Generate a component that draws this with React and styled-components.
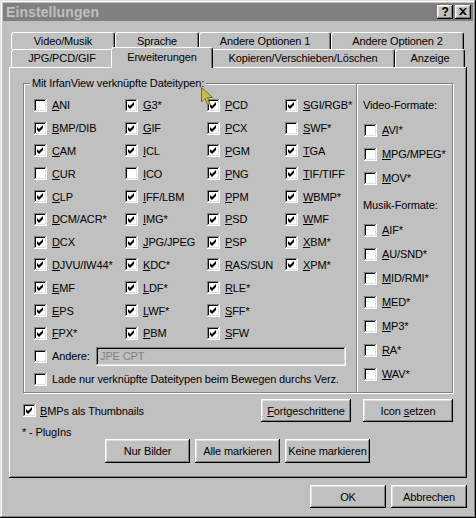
import React from "react";
import styled, { createGlobalStyle } from "styled-components";

const GlobalStyle = createGlobalStyle`
  body {
    margin: 0;
    overflow: hidden;
    font-family: "Liberation Sans", Arial, sans-serif;
    font-size: 11px;
    letter-spacing: -0.12px;
    color: #000;
  }
`;

const Window = styled.div`
  position: relative;
  box-sizing: border-box;
  width: 476px;
  height: 518px;
  padding: 3px;
  background: #c0c0c0;
  box-shadow: inset -1px -1px #000, inset 1px 1px #dfdfdf, inset -2px -2px #808080, inset 2px 2px #fff;
  display: flex;
  flex-direction: column;
`;

const TitleBar = styled.div`
  height: 18px;
  padding: 0 2px 0 3px;
  background: #808080;
  display: flex;
  align-items: center;
  justify-content: space-between;
`;

const Title = styled.span`
  font-size: 14px;
  font-weight: 700;
  color: #c0c0c0;
  letter-spacing: 0.1px;
`;

const CaptionButtons = styled.div`
  display: flex;
  gap: 2px;
`;

const CaptionButton = styled.div`
  box-sizing: border-box;
  width: 16px;
  height: 14px;
  background: #c0c0c0;
  box-shadow: inset -1px -1px #000, inset 1px 1px #fff, inset -2px -2px #808080, inset 2px 2px #dfdfdf;
  display: flex;
  align-items: center;
  justify-content: center;
  font-size: 12px;
  font-weight: 700;
  line-height: 1;
  padding-bottom: 1px;
`;

const Body = styled.div`
  padding: 11px 0 0 6px;
  display: flex;
  flex-direction: column;
`;

const TabStrip = styled.div`
  padding-left: 2px;
  display: flex;
  flex-direction: column;
`;

const TabRow = styled.div`
  display: flex;
  height: ${(p) => (p.$front ? 18 : 17)}px;
  align-items: flex-start;
`;

const Tab = styled.div`
  position: relative;
  box-sizing: border-box;
  flex: none;
  width: ${(p) => p.$w + (p.$active ? 4 : 0)}px;
  height: ${(p) => (p.$active ? 21 : p.$front ? 18 : 17)}px;
  margin: ${(p) => (p.$active ? "-2px -2px 0 -2px" : "0")};
  z-index: ${(p) => (p.$active ? 2 : 0)};
  padding-bottom: ${(p) => (p.$active ? 3 : 1)}px;
  background: #c0c0c0;
  border-top: 1px solid #fff;
  border-left: 1px solid #fff;
  border-right: 1px solid #000;
  border-radius: 3px 3px 0 0;
  box-shadow: inset -1px 0 #808080;
  display: flex;
  align-items: center;
  justify-content: center;
  white-space: nowrap;
`;

const Panel = styled.div`
  position: relative;
  box-sizing: border-box;
  width: 458px;
  height: 411px;
  padding: 16px 14px 0 14px;
  box-shadow: inset -1px -1px #000, inset 1px 1px #fff, inset -2px -2px #808080;
  display: flex;
  flex-direction: column;
`;

const Groups = styled.div`
  display: flex;
  height: 311px;
`;

const Group = styled.div`
  position: relative;
  box-sizing: border-box;
  width: ${(p) => p.$w}px;
  height: 310px;
  margin-left: ${(p) => p.$overlap || 0}px;
  border: 1px solid #808080;
  box-shadow: inset 1px 1px #fff, 1px 1px #fff;
  padding: 10px 0 0 ${(p) => p.$pad}px;
`;

const Caption = styled.span`
  position: absolute;
  top: -7px;
  left: 6px;
  padding: 0 2px;
  background: #c0c0c0;
  line-height: 13px;
`;

const FileGrid = styled.div`
  display: grid;
  grid-auto-flow: column;
  grid-template-rows: repeat(11, 22.8px);
  grid-template-columns: 91px 82px 78px 1fr;
`;

const CheckItem = styled.div`
  display: flex;
  align-items: center;
  gap: ${(p) => p.$gap || 5}px;
  height: ${(p) => p.$h || 23}px;
  white-space: nowrap;
`;

const Box = styled.span`
  position: relative;
  flex: none;
  box-sizing: border-box;
  width: 13px;
  height: 13px;
  background: #fff;
  box-shadow: inset -1px -1px #fff, inset 1px 1px #808080, inset -2px -2px #dfdfdf, inset 2px 2px #000;
  display: block;
`;

const CheckMark = styled.svg`
  position: absolute;
  left: 0;
  top: 0;
  width: 13px;
  height: 13px;
`;

const Field = styled.div`
  box-sizing: border-box;
  width: 250px;
  height: 19px;
  margin-left: auto;
  margin-right: 10px;
  padding: 3px 4px;
  color: #808080;
  box-shadow: inset -1px -1px #fff, inset 1px 1px #808080, inset -2px -2px #dfdfdf, inset 2px 2px #000;
  line-height: 13px;
`;

const SectionLabel = styled.div`
  height: 22px;
  display: flex;
  align-items: center;
  margin-top: ${(p) => p.$top || 0}px;
  margin-left: -1px;
  white-space: nowrap;
`;

const MediaList = styled.div`
  display: flex;
  flex-direction: column;
  margin-top: 2px;
`;

const OptionsRow = styled.div`
  display: flex;
  align-items: center;
  gap: 12px;
  margin-top: 5px;
`;

const Push = styled.div`
  box-sizing: border-box;
  flex: none;
  width: ${(p) => p.$w}px;
  height: ${(p) => p.$h || 23}px;
  background: #c0c0c0;
  box-shadow: inset -1px -1px #000, inset 1px 1px #fff, inset -2px -2px #808080, inset 2px 2px #dfdfdf;
  display: flex;
  align-items: center;
  justify-content: center;
  white-space: nowrap;
  margin-left: ${(p) => (p.$auto ? "auto" : "0")};
`;

const Note = styled.div`
  height: 13px;
  line-height: 13px;
  margin: 4px 0 0 -1px;
`;

const MarkRow = styled.div`
  display: flex;
  gap: 5px;
  margin-left: 82px;
`;

const Footer = styled.div`
  display: flex;
  justify-content: flex-end;
  gap: 5px;
  margin-top: 7px;
  padding-right: 6px;
`;

const CursorArrow = styled.svg`
  position: absolute;
  left: 201px;
  top: 87px;
  width: 13px;
  height: 19px;
`;

const Check = ({ on }) => (
  <Box>
    {on && (
      <CheckMark viewBox="0 0 13 13">
        <path d="M3 5 L5 7 L9 3 L9 6 L5 10 L3 8 Z" fill="#000" />
      </CheckMark>
    )}
  </Box>
);

const Mn = ({ text }) => (
  <span>
    <u>{text[0]}</u>
    {text.slice(1)}
  </span>
);

const Option = ({ label, on, h, gap }) => (
  <CheckItem $h={h} $gap={gap}>
    <Check on={on} />
    <Mn text={label} />
  </CheckItem>
);

const backTabs = [
  ["Video/Musik", 104],
  ["Sprache", 84],
  ["Andere Optionen 1", 132],
  ["Andere Optionen 2", 133],
];

const frontTabs = [
  ["JPG/PCD/GIF", 102],
  ["Erweiterungen", 98, true],
  ["Kopieren/Verschieben/Löschen", 184],
  ["Anzeige", 70],
];

const fileTypes = [
  ["ANI", 0], ["BMP/DIB", 1], ["CAM", 1], ["CUR", 0], ["CLP", 1], ["DCM/ACR*", 1],
  ["DCX", 1], ["DJVU/IW44*", 1], ["EMF", 1], ["EPS", 1], ["FPX*", 1],
  ["G3*", 1], ["GIF", 1], ["ICL", 1], ["ICO", 0], ["IFF/LBM", 1], ["IMG*", 1],
  ["JPG/JPEG", 1], ["KDC*", 1], ["LDF*", 1], ["LWF*", 1], ["PBM", 1],
  ["PCD", 1], ["PCX", 1], ["PGM", 1], ["PNG", 1], ["PPM", 1], ["PSD", 1],
  ["PSP", 1], ["RAS/SUN", 1], ["RLE*", 1], ["SFF*", 1], ["SFW", 1],
  ["SGI/RGB*", 1], ["SWF*", 0], ["TGA", 1], ["TIF/TIFF", 1], ["WBMP*", 1],
  ["WMF", 1], ["XBM*", 1], ["XPM*", 1],
];

const videoTypes = ["AVI*", "MPG/MPEG*", "MOV*"];
const musicTypes = ["AIF*", "AU/SND*", "MID/RMI*", "MED*", "MP3*", "RA*", "WAV*"];

const App = () => (
  <Window>
    <GlobalStyle />
    <TitleBar>
      <Title>Einstellungen</Title>
      <CaptionButtons>
        <CaptionButton>?</CaptionButton>
        <CaptionButton>
          <svg width="8" height="7" viewBox="0 0 8 7">
            <path d="M0 0h2l2 2 2-2h2L5 3.5 8 7H6L4 5 2 7H0l3-3.5z" fill="#000" />
          </svg>
        </CaptionButton>
      </CaptionButtons>
    </TitleBar>

    <Body>
      <TabStrip>
        <TabRow>
          {backTabs.map(([label, w]) => (
            <Tab key={label} $w={w}>{label}</Tab>
          ))}
        </TabRow>
        <TabRow $front>
          {frontTabs.map(([label, w, active]) => (
            <Tab key={label} $w={w} $front $active={active}>{label}</Tab>
          ))}
        </TabRow>
      </TabStrip>

      <Panel>
        <Groups>
          <Group $w={334} $pad={10}>
            <Caption>Mit IrfanView verknüpfte Dateitypen:</Caption>
            <FileGrid>
              {fileTypes.map(([label, on]) => (
                <Option key={label} label={label} on={!!on} h={22.8} />
              ))}
            </FileGrid>
            <CheckItem>
              <Check />
              <span>Andere:</span>
              <Field>JPE CPT</Field>
            </CheckItem>
            <CheckItem>
              <Check />
              <span>Lade nur verknüpfte Dateitypen beim Bewegen durchs Verz.</span>
            </CheckItem>
          </Group>

          <Group $w={97} $pad={7} $overlap={-1}>
            <SectionLabel>Video-Formate:</SectionLabel>
            <MediaList>
              {videoTypes.map((t) => (
                <Option key={t} label={t} h={24} />
              ))}
            </MediaList>
            <SectionLabel $top={4}>Musik-Formate:</SectionLabel>
            <MediaList>
              {musicTypes.map((t) => (
                <Option key={t} label={t} h={24} />
              ))}
            </MediaList>
          </Group>
        </Groups>

        <OptionsRow>
          <CheckItem $gap={4}>
            <Check on />
            <span><u>B</u>MPs als Thumbnails</span>
          </CheckItem>
          <Push $w={90} $auto><span><u>F</u>ortgeschrittene</span></Push>
          <Push $w={90}><span>Icon <u>s</u>etzen</span></Push>
        </OptionsRow>

        <Note>* - PlugIns</Note>

        <MarkRow>
          <Push $w={85} $h={24}>Nur Bilder</Push>
          <Push $w={85} $h={24}>Alle markieren</Push>
          <Push $w={85} $h={24}>Keine markieren</Push>
        </MarkRow>
      </Panel>

      <Footer>
        <Push $w={76}>OK</Push>
        <Push $w={76}>Abbrechen</Push>
      </Footer>
    </Body>

    <CursorArrow viewBox="0 0 13 19">
      <path
        d="M0.5 0.5 L0.5 15 L4 11.5 L6.5 17.5 L9 16.5 L6.5 10.5 L11.5 10.5 Z"
        fill="#cdbb3a"
        stroke="#6f6418"
        strokeWidth="1"
        opacity="0.9"
      />
    </CursorArrow>
  </Window>
);

export default App;
